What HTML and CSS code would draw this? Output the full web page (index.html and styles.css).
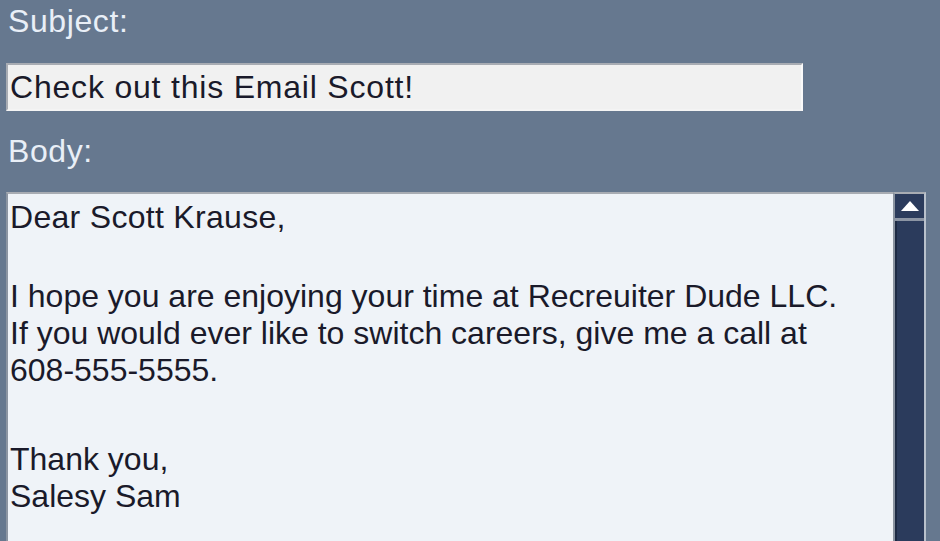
FILE: index.html
```html
<!DOCTYPE html>
<html>
<head>
<meta charset="utf-8">
<link rel="stylesheet" href="styles.css">
</head>
<body>
<div class="form">
  <div class="label">Subject:</div>
  <div class="subject">Check out this Email Scott!</div>
  <div class="label body-label">Body:</div>
  <div class="body-row">
    <div class="body-text">
      <p class="para p-greet">Dear Scott Krause,</p>
      <p class="para p-main">I hope you are enjoying your time at Recreuiter Dude LLC.<br>If you would ever like to switch careers, give me a call at<br>608-555-5555.</p>
      <p class="para">Thank you,<br>Salesy Sam</p>
    </div>
    <div class="scrollbar">
      <div class="scroll-up">
        <svg width="20" height="12" viewBox="0 0 20 12"><polygon points="10,1 19,11 1,11" fill="#ffffff"/></svg>
      </div>
      <div class="scroll-track"></div>
    </div>
  </div>
</div>
</body>
</html>
```
FILE: styles.css
```css
html, body {
  margin: 0;
  padding: 0;
  background: #66788f;
  overflow: hidden;
}
.form {
  display: flex;
  flex-direction: column;
  padding: 0 0 0 6px;
  font-family: "Liberation Sans", Arial, sans-serif;
  font-size: 32px;
  line-height: 37px;
}
.label {
  color: #e9eff7;
  padding: 3px 0 0 2px;
  height: 63px;
  box-sizing: border-box;
  letter-spacing: 0.6px;
}
.body-label {
  padding-top: 22px;
  height: 81px;
}
.subject {
  width: 797px;
  height: 48px;
  box-sizing: border-box;
  background: #f1f1f1;
  color: #1a1a2a;
  border-top: 2px solid #a8acb3;
  border-left: 2px solid #a8acb3;
  border-right: 2px solid #fafafa;
  border-bottom: 2px solid #f4f4f4;
  padding: 4px 0 0 2px;
  line-height: 37px;
  letter-spacing: 0.8px;
}
.body-row {
  display: flex;
  height: 360px;
}
.body-text {
  width: 887px;
  box-sizing: border-box;
  background: #eff3f8;
  color: #1a1a2a;
  border-top: 2px solid #a8acb3;
  border-left: 2px solid #8c95a2;
  padding: 5px 0 0 2px;
  white-space: nowrap;
}
.para {
  margin: 0;
}
.p-greet {
  margin-bottom: 42px;
  letter-spacing: 0.3px;
}
.p-main {
  margin-bottom: 52px;
}
.scrollbar {
  width: 33px;
  display: flex;
  flex-direction: column;
  background: #2b3b5c;
  border-left: 2px solid #8a93a0;
  border-right: 2px solid #b9c1cc;
  border-top: 2px solid #a8acb3;
  box-sizing: border-box;
}
.scroll-up {
  height: 24px;
  display: flex;
  align-items: center;
  justify-content: center;
  border-bottom: 3px solid #8c95a4;
  background: #2b3b5c;
}
.scroll-track {
  flex: 1;
  background: #2b3b5c;
  border-left: 2px solid #1d2a44;
}
```
